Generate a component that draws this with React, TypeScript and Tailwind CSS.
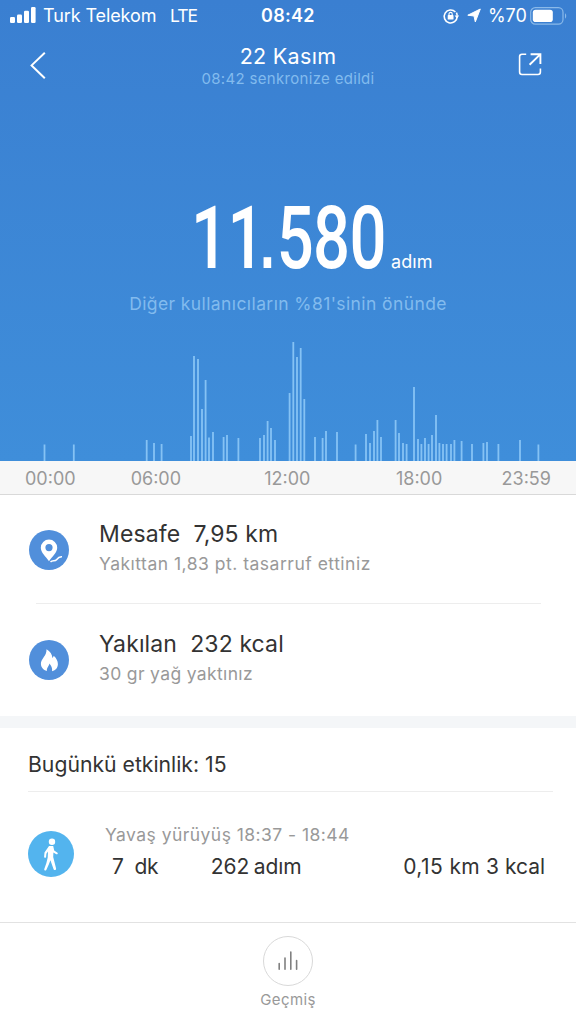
import React from "react";

const steps: [number, number][] = [
  [44.5, 16.5], [73.8, 16.5], [146.7, 21], [154, 18], [161.6, 17],
  [191, 25], [194, 105], [198, 102], [202, 52], [205.6, 81], [209, 23.5], [213, 29],
  [223.6, 24], [227, 26], [238.4, 23], [260, 23], [264, 26], [267.6, 40], [271, 33], [275, 21],
  [289.6, 68], [293.3, 119], [297, 104], [300.7, 113], [304.3, 62],
  [315, 24], [322.6, 23], [326, 30], [337, 29], [355.6, 16.5], [366, 27], [370, 18], [374, 30], [377.4, 41],
  [381, 24], [395.6, 41], [399, 28], [403, 18], [406.6, 17], [414, 74], [418, 22], [421.4, 17],
  [425, 23], [428.6, 17], [432, 26], [436, 46], [439.4, 18], [443, 17], [446.6, 17], [451, 17],
  [454.4, 21], [461.6, 20], [472, 17], [483.4, 18], [487, 19], [498.4, 17], [520, 21], [538.4, 16.5],
];

function StatusBar() {
  return (
    <div className="flex h-[31px] items-center whitespace-pre pl-[10px] pr-[8px] text-[18px] leading-[31px] text-white">
      <svg className="h-[17px] w-[26px]" viewBox="0 0 26 17" fill="currentColor">
        <rect x="0" y="10" width="5" height="6" rx="1.2" />
        <rect x="7" y="7.5" width="5" height="8.5" rx="1.2" />
        <rect x="14" y="3.7" width="5" height="12.3" rx="1.2" />
        <rect x="21" y="0" width="4.6" height="16" rx="1.2" />
      </svg>
      <span className="ml-[7px] w-[127px] tracking-[-0.1px]">Turk Telekom</span>
      <span className="w-[91px] text-[17.5px] tracking-[-1px]">LTE</span>
      <span className="w-[181px] font-semibold tracking-[0.3px]">08:42</span>
      <svg className="h-[18px] w-[18px]" viewBox="0 0 18 18" fill="none" stroke="currentColor" strokeWidth="1.6">
        <path d="M14.6 9.2A6.5 6.5 0 1 1 12.8 4.6" transform="translate(.6 .4)" />
        <path d="M14.4 5.6a6.6 6.6 0 0 1 .7 3.2" />
        <path d="M12.6 8.6h4.6l-2.3 3z" fill="currentColor" stroke="none" />
        <rect x="5.7" y="8" width="5.8" height="4.6" rx=".7" fill="currentColor" stroke="none" />
        <path d="M7 8.2V7a1.6 1.6 0 0 1 3.2 0v1.2" strokeWidth="1.1" />
      </svg>
      <svg className="ml-[7px] h-[15px] w-[14px]" viewBox="0 0 14 15" fill="currentColor" stroke="currentColor" strokeWidth="1" strokeLinejoin="round">
        <path d="M13.300 1 8.300 13.900 7 8 .8 7.200z" />
      </svg>
      <span className="ml-[7px] w-[42px] tracking-[-0.1px]">%70</span>
      <svg className="h-[18px] w-[38px]" viewBox="0 0 38 18" fill="none">
        <rect x=".7" y=".7" width="32.3" height="16.4" rx="4.6" stroke="#8ab9e9" strokeWidth="1.2" />
        <rect x="2.8" y="2.8" width="20" height="12.2" rx="2.8" fill="white" />
        <path d="M35 6.2c1.6.8 1.6 4.6 0 5.4z" fill="#8ab9e9" />
      </svg>
    </div>
  );
}

function NavBar() {
  return (
    <div className="flex h-[70px] items-start justify-between pl-[30px] pr-[34px] pt-[13px] text-white">
      <svg className="mt-[8px] h-[27px] w-[16px]" viewBox="0 0 16 27" fill="none" stroke="currentColor" strokeWidth="2">
        <path d="M14.8.8 1.6 13.4l13.2 12.8" />
      </svg>
      <div className="ml-[12px] flex flex-col items-center whitespace-pre">
        <span className="text-[21.5px] leading-[24px] tracking-[0.3px]">22 Kasım</span>
        <span className="text-[15px] leading-[21px] tracking-[0.32px] text-[#82bbee]">08:42 senkronize edildi</span>
      </div>
      <svg className="mt-[9px] h-[23px] w-[24px]" viewBox="0 0 24 23" fill="none" stroke="currentColor" strokeWidth="1.6">
        <path d="M8.2 1.2H4A2.4 2.4 0 0 0 1.6 3.6v15.5A2.4 2.4 0 0 0 4 21.5h16a2.4 2.4 0 0 0 2.4-2.4v-3.6" />
        <path d="M12.6 1.2h9.8v9.8M22.2 1.4 11.6 11.8" strokeWidth="1.9" />
      </svg>
    </div>
  );
}

function StepChart() {
  return (
    <svg className="block h-[120px] w-full" viewBox="0 0 576 120">
      {steps.map(([x, h]) => (
        <rect key={x} x={x - 0.9} y={120 - h} width="1.8" height={h} fill="#85c2f4" />
      ))}
    </svg>
  );
}

type MetricProps = { icon: React.ReactNode; title: string; note: React.ReactNode };

function Metric({ icon, title, note }: MetricProps) {
  return (
    <div className="flex h-[108px] items-start pl-[29px] pt-[25px]">
      <div className="mt-[10px] flex h-[40px] w-[40px] items-center justify-center rounded-full bg-[#518fdb] text-white">{icon}</div>
      <div className="ml-[30px] whitespace-pre">
        <div className="text-[23px] leading-[28px] tracking-[0.12px] text-[#333]">{title}</div>
        <div className="text-[17.5px] leading-[31px] text-[#999]">{note}</div>
      </div>
    </div>
  );
}

export default function App() {
  return (
    <div className="flex h-[1024px] w-[576px] flex-col overflow-hidden bg-white font-['Inter',sans-serif]">
      <header className="flex h-[461px] shrink-0 flex-col bg-gradient-to-b from-[#3a7fd1] to-[#3f8eda]">
        <StatusBar />
        <NavBar />
        <div className="mt-[93px] flex h-[88px] whitespace-pre pl-[191px] text-white">
          <div className="w-[200px]">
            <div className="flex w-[270px] origin-left scale-x-[0.74] items-baseline font-['Roboto',sans-serif] text-[88px] font-medium leading-[88px] [font-kerning:none]">
              <span className="tracking-[-0.8px]">1</span>
              <span className="tracking-[-6px]">1</span>
              <span className="font-['Liberation_Sans',sans-serif] text-[72px] font-bold leading-[72px] tracking-[2.5px]">.</span>
              <span className="tracking-[-0.8px]">580</span>
            </div>
          </div>
          <span className="mt-[55px] text-[18px] leading-[25px] tracking-[0.1px]">adım</span>
        </div>
        <div className="mt-[9px] whitespace-pre text-center text-[17.5px] leading-[25px] tracking-[0.4px] text-[#82bbee]">
          Diğer kullanıcıların %81'sinin önünde
        </div>
        <div className="mt-auto">
          <StepChart />
        </div>
      </header>

      <div className="flex h-[34px] shrink-0 justify-between border-b border-[#d9d9d9] bg-[#f7f7f7] pl-[25px] pr-[25px] text-[18px] leading-[35px] text-[#999]">
        <span className="w-[105px]">00:00</span>
        <span className="w-[133px]">06:00</span>
        <span className="w-[131px]">12:00</span>
        <span className="w-[105px]">18:00</span>
        <span>23:59</span>
      </div>

      <Metric
        icon={
          <svg className="h-[40px] w-[40px]" viewBox="0 0 40 40" fill="currentColor">
            <path fillRule="evenodd" d="M20 9.6a8.200 8.200 0 0 0-8.200 8.200c0 5 5 8.800 8.200 13.400 3.200-4.600 8.200-8.400 8.200-13.400A8.200 8.200 0 0 0 20 9.600zm0 4.400a3.600 3.600 0 1 1 0 7.200 3.600 3.600 0 0 1 0-7.200z" />
            <path d="M21.500 32c2-2 4.500-.3 6-2.300s2.500-3.200 5.500-2.900" fill="none" stroke="currentColor" strokeWidth="1.5" />
          </svg>
        }
        title="Mesafe  7,95 km"
        note={<span className="tracking-[0.5px]">Yakıttan 1,83 pt. tasarruf ettiniz</span>}
      />
      <div className="ml-[36px] mr-[35px] h-px shrink-0 bg-[#ededed]" />
      <div className="h-[112px] shrink-0 pt-[1px]">
        <Metric
          icon={
            <svg className="h-[40px] w-[40px]" viewBox="0 0 40 40" fill="currentColor">
              <path d="M17.500 9.200c3.600 2 5.800 5.200 5.900 8.900.7-.6 1.100-1.400 1.300-2.300 2.600 2.400 4.200 5.200 4.200 8.200 0 3.600-2.300 6.400-5.800 7.200.4-2.900-.8-5.300-2.700-7.600-.2 2.400-2.900 4.300-2.500 7.500-3.600-1.100-6-3.800-6-7.300 0-5.400 6-7.800 5.600-14.600z" />
            </svg>
          }
          title="Yakılan  232 kcal"
          note={<span className="tracking-[0.35px]">30 gr yağ yaktınız</span>}
        />
      </div>
      <div className="h-[12px] shrink-0 bg-[#f4f6f8]" />

      <section className="flex flex-1 flex-col whitespace-pre">
        <h2 className="h-[63px] pl-[28px] pt-[22px] text-[21.2px] leading-[28px] text-[#333]">Bugünkü etkinlik: 15</h2>
        <div className="ml-[28px] mr-[23px] h-px bg-[#ededed]" />
        <div className="flex pl-[28px] pt-[27px]">
          <div className="mt-[12px] flex h-[46px] w-[46px] items-center justify-center rounded-full bg-[#53b4ee] text-white">
            <svg className="h-[46px] w-[46px]" viewBox="0 0 46 46" fill="currentColor">
              <circle cx="24" cy="10.7" r="3.2" />
              <path d="M21 15h4.200l1 4.500 3.300 2.200c.7.700 0 2-1.200 1.500l-2.900-1.700-.2 4.500 2.900 11.500c.2 1.700-1.900 2.200-2.500.7l-3.200-9-1.500 4.100-2.600 5.600c-.8 1.200-2.500.4-2-.9l2.100-6 1.300-5.400.3-6.200-1.600 2.300-.3 3.200c-.3 1.300-2 1.200-2-.2l.4-4.200z" />
            </svg>
          </div>
          <div className="ml-[31px] w-[440px]">
            <div className="text-[17.5px] leading-[31px] tracking-[0.45px] text-[#999]">Yavaş yürüyüş 18:37 - 18:44</div>
            <div className="flex pl-[7px] text-[21px] leading-[33px] text-[#333]">
              <span className="w-[99px] tracking-[-0.4px]">7  dk</span>
              <span className="w-[43px]">262</span>
              <span className="w-[150px]">adım</span>
              <span className="w-[83px] tracking-[0.4px]">0,15 km</span>
              <span>3 kcal</span>
            </div>
          </div>
        </div>
      </section>

      <footer className="flex h-[102px] shrink-0 flex-col items-center border-t border-[#e2e2e2] pt-[13px]">
        <div className="flex h-[50px] w-[50px] items-center justify-center rounded-full border border-[#d9d9d9]">
          <svg className="h-[20px] w-[20px]" viewBox="0 0 20 20" fill="none" stroke="#808080" strokeWidth="1.6" strokeLinecap="round">
            <path d="M1.200 12.500v5.700M7 7v11.200M12.800 1v17.200M18.600 9.500v8.700" />
          </svg>
        </div>
        <span className="mt-[3px] text-[15px] leading-[21px] tracking-[0.4px] text-[#999]">Geçmiş</span>
      </footer>
    </div>
  );
}
